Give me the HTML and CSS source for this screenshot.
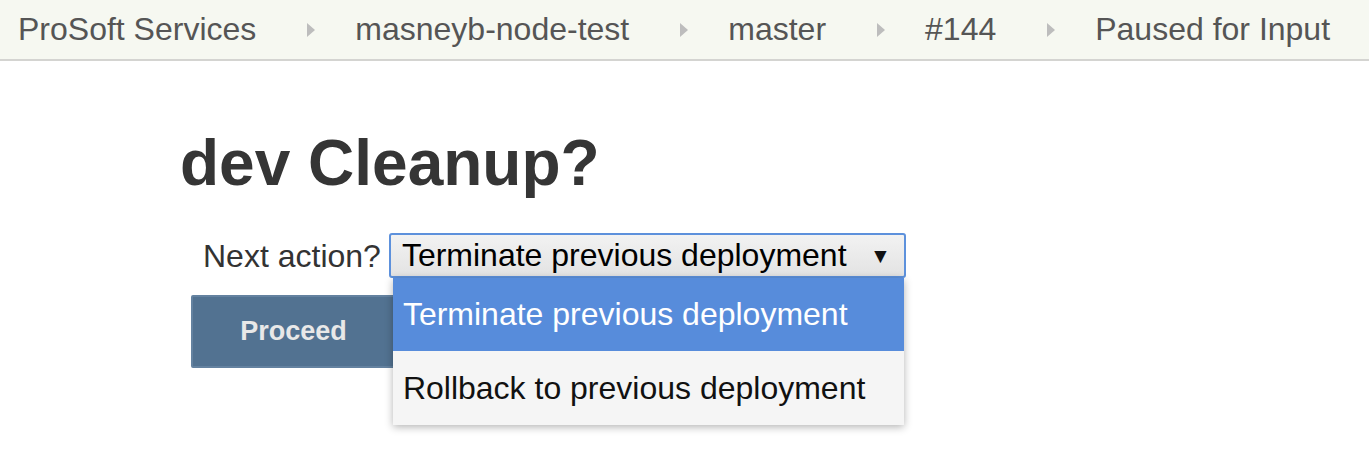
FILE: index.html
```html
<!DOCTYPE html>
<html>
<head>
<meta charset="utf-8">
<link rel="stylesheet" href="styles.css">
</head>
<body>
<nav class="breadcrumbs">
  <span class="crumb">ProSoft Services</span>
  <span class="sep"></span>
  <span class="crumb">masneyb-node-test</span>
  <span class="sep"></span>
  <span class="crumb">master</span>
  <span class="sep"></span>
  <span class="crumb">#144</span>
  <span class="sep"></span>
  <span class="crumb">Paused for Input</span>
</nav>
<main class="content">
  <h1 class="title">dev Cleanup?</h1>
  <form class="form">
    <div class="field">
      <span class="label">Next action?</span>
      <div class="select-wrap">
        <div class="select">
          <span class="select-value">Terminate previous deployment</span>
          <span class="select-arrow">▼</span>
        </div>
        <ul class="options">
          <li class="option selected">Terminate previous deployment</li>
          <li class="option">Rollback to previous deployment</li>
        </ul>
      </div>
    </div>
    <div class="actions">
      <button type="button" class="btn">Proceed</button>
    </div>
  </form>
</main>
</body>
</html>
```
FILE: styles.css
```css
html, body {
  margin: 0;
  padding: 0;
  background: #ffffff;
  font-family: "Liberation Sans", Arial, sans-serif;
}

body {
  min-height: 460px;
}

.breadcrumbs {
  display: flex;
  align-items: center;
  height: 59px;
  padding-left: 18px;
  background: #f6f8f1;
  border-bottom: 2px solid #d4d4d1;
  font-size: 32px;
  color: #555555;
}

.crumb {
  white-space: nowrap;
}

.sep {
  width: 0;
  height: 0;
  border-top: 7px solid transparent;
  border-bottom: 7px solid transparent;
  border-left: 8px solid #bdbdbd;
  margin: 0 40px 0 51px;
}

.content {
  padding-left: 180px;
}

.title {
  margin: 66px 0 0 0;
  font-size: 64px;
  line-height: 72px;
  font-weight: bold;
  color: #353535;
}

.form {
  margin-top: 34px;
}

.field {
  display: flex;
  align-items: center;
  padding-left: 23px;
}

.label {
  font-size: 32px;
  line-height: 44px;
  color: #333333;
  margin-right: 8px;
}

.select-wrap {
  position: relative;
}

.select {
  box-sizing: border-box;
  width: 517px;
  height: 45px;
  display: flex;
  align-items: center;
  justify-content: space-between;
  padding: 0 13px 0 11px;
  border: 2px solid #5d91dc;
  border-radius: 3px;
  background: linear-gradient(#f2f2f2, #e3e3e3);
  font-size: 32px;
  color: #000000;
}

.select-arrow {
  font-size: 21px;
  color: #111111;
}

.options {
  position: absolute;
  z-index: 5;
  left: 4px;
  top: 45px;
  width: 511px;
  margin: 0;
  padding: 0;
  list-style: none;
  background: #f5f5f5;
  box-shadow: 0 2px 8px rgba(0, 0, 0, 0.3);
}

.option {
  height: 74px;
  line-height: 74px;
  padding-left: 10px;
  font-size: 32px;
  color: #111111;
  white-space: nowrap;
}

.option.selected {
  height: 73px;
  line-height: 73px;
  background: #578cdb;
  color: #ffffff;
}

.actions {
  margin-top: 17px;
  padding-left: 11px;
}

.btn {
  width: 205px;
  height: 73px;
  background: #527291;
  border: 2px solid #6482a0;
  border-radius: 2px;
  color: #e8e8e8;
  font-family: "Liberation Sans", Arial, sans-serif;
  font-size: 27px;
  font-weight: bold;
  padding: 0;
}
```
